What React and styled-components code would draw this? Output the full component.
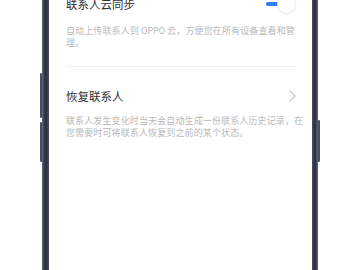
import styled, { createGlobalStyle } from 'styled-components';

const GlobalStyle = createGlobalStyle`
  html, body {
    margin: 0;
    padding: 0;
    background: #ffffff;
  }
  body {
    font-family: "Noto Sans CJK SC", "Noto Sans", sans-serif;
  }
`;

const Stage = styled.div`
  width: 360px;
  height: 270px;
  overflow: hidden;
  background: #ffffff;
`;

const Phone = styled.div`
  position: relative;
  width: 276px;
  height: 270px;
  margin-left: 42px;
  display: flex;
  background: linear-gradient(
    90deg,
    #666a80 0px,
    #3b3d50 2px,
    #2a2c3a 4px,
    #4d5066 7px,
    #4d5066 calc(100% - 6px),
    #2a2c3a calc(100% - 3px),
    #62657b 100%
  );
`;

const SideButton = styled.span`
  position: absolute;
  top: ${(p) => p.$top}px;
  height: ${(p) => p.$height}px;
  width: 2px;
  background: #4a4d62;
  ${(p) => (p.$right ? 'right: -2px;' : 'left: -2px;')}
  border-radius: 1px;
`;

const Screen = styled.div`
  flex: 1;
  margin: 0 6px 0 7px;
  background: #ffffff;
  overflow: hidden;
`;

const Content = styled.div`
  margin-top: -5px;
  padding: 0 16px 0 17px;
  display: flex;
  flex-direction: column;
`;

const Row = styled.div`
  height: 18px;
  margin-top: ${(p) => p.$gap || 0}px;
  margin-right: 1px;
  display: flex;
  align-items: center;
  justify-content: space-between;
`;

const Title = styled.span`
  font-size: 11.5px;
  line-height: 14px;
  color: #2e2e2e;
`;

const Description = styled.p`
  margin: ${(p) => p.$gap}px 0 0;
  font-size: 9px;
  letter-spacing: 0.12px;
  line-height: 11.5px;
  color: #b9b9b9;
  white-space: nowrap;
`;

const Latin = styled.span`
  letter-spacing: -0.2px;
`;

const Divider = styled.div`
  height: 1px;
  margin: 18px 1px 0 0;
  background: #efefef;
`;

const Switch = styled.span`
  position: relative;
  width: 30px;
  height: 18px;
  margin-right: -1px;
`;

const Track = styled.span`
  position: absolute;
  left: 0;
  top: 7px;
  width: 14px;
  height: 4px;
  border-radius: 2px;
  background: #2f7cf6;
`;

const Knob = styled.span`
  position: absolute;
  right: 0;
  top: 0;
  width: 17px;
  height: 17px;
  border-radius: 50%;
  background: #ffffff;
  border: 0.5px solid #eeeeee;
  box-shadow: 0 0.5px 1.5px rgba(0, 0, 0, 0.08);
`;

const Chevron = () => (
  <svg width="7" height="12" viewBox="0 0 7 12" style={{ marginRight: '-1px' }}>
    <polyline
      points="1,1 6,6 1,11"
      fill="none"
      stroke="#c9c9c9"
      strokeWidth="1.3"
      strokeLinecap="round"
      strokeLinejoin="round"
    />
  </svg>
);

export default function App() {
  return (
    <Stage>
      <GlobalStyle />
      <Phone>
        <SideButton $top={73} $height={45} />
        <SideButton $top={122} $height={40} />
        <SideButton $right $top={120} $height={42} />
        <Screen>
          <Content>
            <Row>
              <Title>联系人云同步</Title>
              <Switch>
                <Track />
                <Knob />
              </Switch>
            </Row>
            <Description $gap={12}>
              自动上传联系人到 <Latin>OPPO</Latin> 云，方便您在所有设备查看和管
              <br />
              理。
            </Description>
            <Divider />
            <Row $gap={20}>
              <Title>恢复联系人</Title>
              <Chevron />
            </Row>
            <Description $gap={10}>
              联系人发生变化时当天会自动生成一份联系人历史记录，在
              <br />
              您需要时可将联系人恢复到之前的某个状态。
            </Description>
          </Content>
        </Screen>
      </Phone>
    </Stage>
  );
}
